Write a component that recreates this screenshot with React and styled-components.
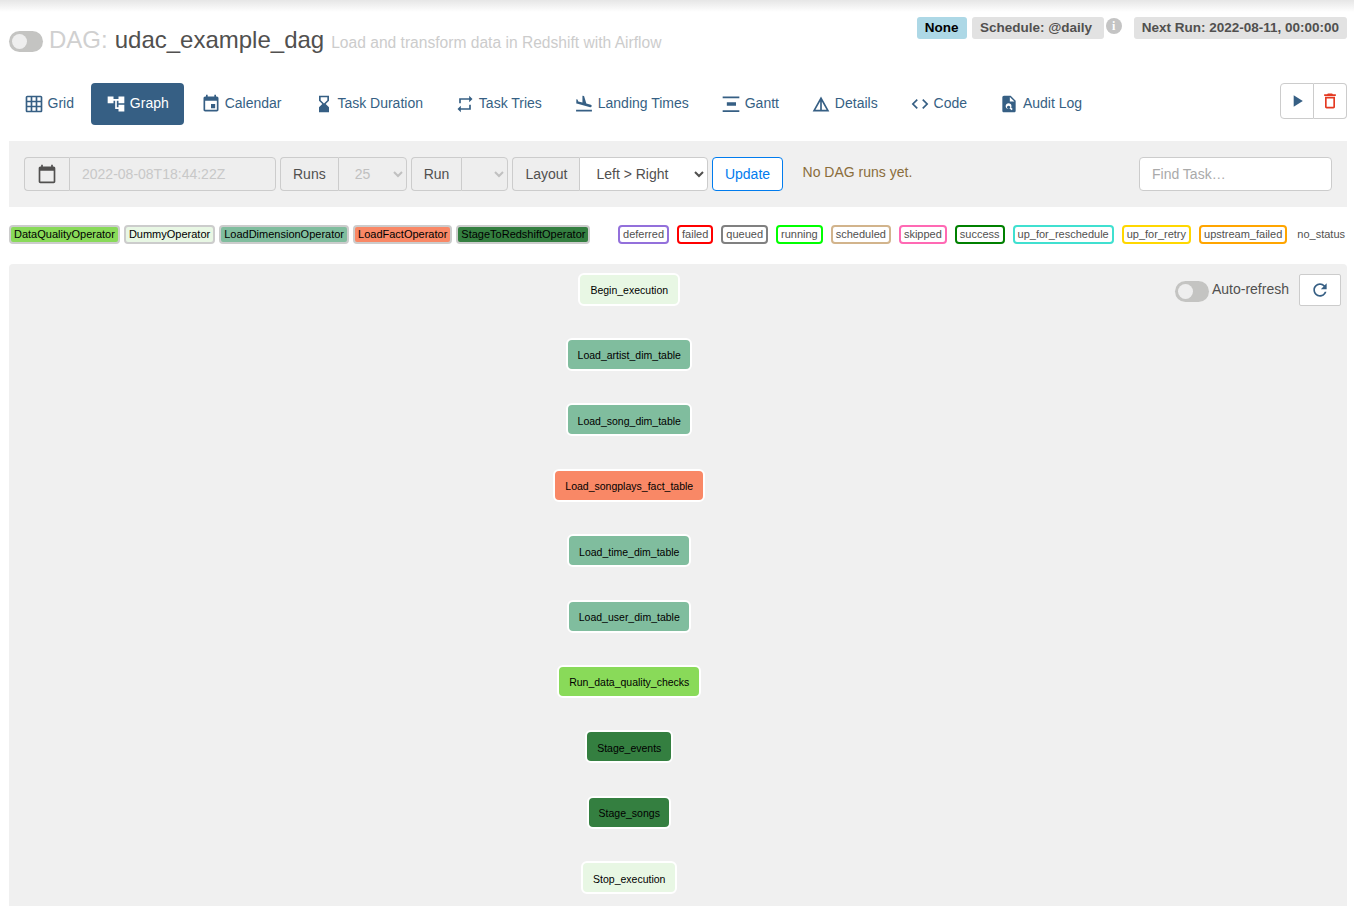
import styled, { createGlobalStyle } from 'styled-components'

const GlobalStyle = createGlobalStyle`
  html, body {
    height: 906px;
    margin: 0;
    overflow: hidden;
  }

  body {
    background: #fff;
    color: #51504f;
    font-family: "Liberation Sans", Arial, sans-serif;
    font-size: 14px;
  }

  * {
    box-sizing: border-box;
  }
`

const blue = '#365f84'

const TopShadow = styled.div`
  background: linear-gradient(#e6e6e6, #fff);
  height: 12px;
  left: 0;
  position: absolute;
  right: 0;
  top: 0;
`

const Page = styled.div`
  margin: 0 7px 0 9px;
  position: relative;
`

const Header = styled.div`
  align-items: flex-start;
  display: flex;
  height: 83px;
  justify-content: space-between;
`

const TitleRow = styled.h3`
  align-items: center;
  display: flex;
  font-size: 24px;
  font-weight: 400;
  line-height: 26px;
  margin: 23px 0 0;
`

const Toggle = styled.span`
  background: #c4c4c2;
  border-radius: 11px;
  display: inline-block;
  flex: none;
  height: 21px;
  margin-top: ${props => props.$offset || 0}px;
  padding: 3px;
  width: 34px;
`

const Knob = styled.span`
  background: #eee;
  border-radius: 50%;
  display: block;
  height: 15px;
  width: 15px;
`

const DagLabel = styled.span`
  color: #d0d0d0;
  margin-left: 6px;
`

const DagName = styled.span`
  margin-left: 7px;
`

const DagDescription = styled.small`
  color: #ccc;
  font-size: 15.6px;
  margin: 7px 0 0 7px;
`

const Badges = styled.div`
  align-items: flex-start;
  display: flex;
  margin-top: 17px;
`

const Badge = styled.span`
  background: ${props => props.$background || '#e2e2e2'};
  border-radius: 3px;
  color: ${props => props.$color || '#51504f'};
  font-size: 13.5px;
  font-weight: 700;
  height: 22px;
  line-height: 22px;
  margin-left: ${props => props.$gap || 0}px;
  padding: 0 ${props => props.$paddingRight || 8}px 0 8px;
`

const InfoDot = styled.span`
  align-items: center;
  background: #c4c4c4;
  border-radius: 50%;
  color: #fff;
  display: flex;
  font-family: "Liberation Serif", serif;
  font-size: 12px;
  font-weight: 700;
  height: 16px;
  justify-content: center;
  margin: 1px 0 0 2px;
  width: 16px;
`

const NavRow = styled.div`
  align-items: flex-start;
  display: flex;
  height: 58px;
  justify-content: space-between;
`

const Tabs = styled.nav`
  display: flex;
  gap: 2px;
`

const Tab = styled.a`
  align-items: center;
  background: ${props => props.$active ? blue : 'transparent'};
  border-radius: 4px;
  color: ${props => props.$active ? '#fff' : blue};
  display: flex;
  gap: 3.5px;
  height: 42px;
  padding: 0 15.4px 0 15px;
`

const TabLabel = styled.span`
  margin-top: -2px;
`

const Icon = styled.svg`
  display: block;
  fill: currentColor;
  flex: none;
  height: ${props => props.$size || 20}px;
  width: ${props => props.$size || 20}px;
`

const ActionGroup = styled.div`
  display: flex;
`

const ActionButton = styled.button`
  align-items: center;
  background: #fff;
  border: 1px solid #ccc;
  border-radius: ${props => props.$last ? '0 4px 4px 0' : '4px 0 0 4px'};
  border-left-width: ${props => props.$last ? 0 : 1}px;
  color: ${props => props.$danger ? '#e43921' : blue};
  display: flex;
  height: 36px;
  justify-content: center;
  padding: 0;
  width: ${props => props.$last ? 33 : 34}px;
`

const FilterBar = styled.form`
  align-items: flex-start;
  background: #f0f0f0;
  display: flex;
  height: 66px;
  justify-content: space-between;
  padding: 16px 15px;
`

const FilterControls = styled.div`
  display: flex;
  gap: 4px;
`

const InputGroup = styled.div`
  display: flex;
  height: 34px;
`

const Addon = styled.span`
  align-items: center;
  background: #eee;
  border: 1px solid #ccc;
  border-radius: 4px 0 0 4px;
  border-right: 0;
  color: #51504f;
  display: flex;
  justify-content: center;
  padding: 0 12px;
`

const DateInput = styled.input`
  background: #eee;
  border: 1px solid #ccc;
  border-radius: 0 4px 4px 0;
  color: #c8c8c8;
  font: inherit;
  padding: 0 12px;
  width: 207px;
`

const Select = styled.select`
  background: ${props => props.disabled ? '#eee' : '#fff'};
  border: 1px solid #ccc;
  border-radius: 0 4px 4px 0;
  color: ${props => props.disabled ? '#c0c0c0' : '#51504f'};
  font: inherit;
  opacity: 1;
  padding: 0 12px;
  width: ${props => props.$width}px;
`

const UpdateButton = styled.button`
  background: #fff;
  border: 1px solid #017cee;
  border-radius: 4px;
  color: #017cee;
  font: inherit;
  height: 34px;
  padding: 0 11.5px;
`

const Notice = styled.span`
  color: #8a6d3b;
  line-height: 20px;
  margin: 5px 0 0 16px;
`

const SearchInput = styled.input`
  background: #fff;
  border: 1px solid #ccc;
  border-radius: 4px;
  font: inherit;
  height: 34px;
  padding: 0 12px;
  width: 193px;

  &::placeholder {
    color: #aaa;
    opacity: 1;
  }
`

const Legend = styled.div`
  align-items: center;
  display: flex;
  height: 57px;
  justify-content: space-between;
  padding-bottom: 2px;
`

const LegendGroup = styled.div`
  display: flex;
  gap: ${props => props.$gap}px;
`

const OperatorTag = styled.span`
  background: ${props => props.$color};
  border: 2px solid #ccc;
  border-radius: 4px;
  color: #000;
  font-size: 11px;
  line-height: 15px;
  padding: 0 3px;
`

const StateTag = styled.span`
  background: #fff;
  border: 2px solid ${props => props.$color};
  border-radius: 4px;
  color: #51504f;
  font-size: 11px;
  line-height: 15px;
  padding: 0 3px;
`

const NoStatusTag = styled.span`
  color: #51504f;
  font-size: 11px;
  line-height: 19px;
  padding: 0 2px;
`

const GraphPanel = styled.div`
  background: #f0f0f0;
  border-radius: 4px 4px 0 0;
  height: 642px;
  overflow: hidden;
  padding-top: 8.6px;
  position: relative;
`

const AutoRefresh = styled.div`
  align-items: center;
  display: flex;
  position: absolute;
  right: 6px;
  top: 10px;
`

const AutoRefreshLabel = styled.span`
  margin: -2px 10px 0 3px;
`

const RefreshButton = styled.button`
  align-items: center;
  background: #fff;
  border: 1px solid #ccc;
  border-radius: 2px;
  color: ${blue};
  display: flex;
  height: 32px;
  justify-content: center;
  padding: 0;
  width: 42px;
`

const NodeColumn = styled.div`
  align-items: center;
  display: flex;
  flex-direction: column;
  gap: 32.4px;
  width: 1240px;
`

const Node = styled.div`
  align-items: center;
  background: ${props => props.$color};
  border: 2px solid #fff;
  border-radius: 6px;
  color: #000;
  display: flex;
  font-size: 10.5px;
  height: 33px;
  padding: 2px 9.5px 0 10px;
`

const stageGreen = '#347f40'

const operators = [
  ['DataQualityOperator', '#89da59'],
  ['DummyOperator', '#e8f7e4'],
  ['LoadDimensionOperator', '#80bd9e'],
  ['LoadFactOperator', '#f98866'],
  ['StageToRedshiftOperator', stageGreen]
]

const states = [
  ['deferred', 'mediumpurple'],
  ['failed', 'red'],
  ['queued', 'gray'],
  ['running', 'lime'],
  ['scheduled', 'tan'],
  ['skipped', 'hotpink'],
  ['success', 'green'],
  ['up_for_reschedule', 'turquoise'],
  ['up_for_retry', 'gold'],
  ['upstream_failed', 'orange']
]

const nodes = [
  ['Begin_execution', '#e8f7e4'],
  ['Load_artist_dim_table', '#80bd9e'],
  ['Load_song_dim_table', '#80bd9e'],
  ['Load_songplays_fact_table', '#f98866'],
  ['Load_time_dim_table', '#80bd9e'],
  ['Load_user_dim_table', '#80bd9e'],
  ['Run_data_quality_checks', '#89da59'],
  ['Stage_events', stageGreen],
  ['Stage_songs', stageGreen],
  ['Stop_execution', '#e8f7e4']
]

const icons = {
  grid: 'M20 2H4c-1.1 0-2 .9-2 2v16c0 1.1.9 2 2 2h16c1.1 0 2-.9 2-2V4c0-1.1-.9-2-2-2zM8 20H4v-4h4v4zm0-6H4v-4h4v4zm0-6H4V4h4v4zm6 12h-4v-4h4v4zm0-6h-4v-4h4v4zm0-6h-4V4h4v4zm6 12h-4v-4h4v4zm0-6h-4v-4h4v4zm0-6h-4V4h4v4z',
  tree: 'M22 11V3h-7v3H9V3H2v8h7V8h2v10h4v3h7v-8h-7v3h-2V8h2v3z',
  event: 'M17 12h-5v5h5v-5zM16 1v2H8V1H6v2H5c-1.11 0-1.99.9-1.99 2L3 19c0 1.1.89 2 2 2h14c1.1 0 2-.9 2-2V5c0-1.1-.9-2-2-2h-1V1h-2zm3 18H5V8h14v11z',
  calendar: 'M20 3h-1V1h-2v2H7V1H5v2H4c-1.1 0-2 .9-2 2v16c0 1.1.9 2 2 2h16c1.1 0 2-.9 2-2V5c0-1.1-.9-2-2-2zm0 18H4V8h16v13z',
  hourglass: 'M18 22l-.01-6L14 12l3.99-4.01L18 2H6v6l4 4-4 3.99V22h12zM8 7.5V4h8v3.5l-4 4-4-4z',
  repeat: 'M7 7h10v3l4-4-4-4v3H5v6h2V7zm10 10H7v-3l-4 4 4 4v-3h12v-6h-2v4z',
  land: 'M2.5 19h19v2h-19zm7.18-5.73l4.35 1.16 5.31 1.42c.8.21 1.62-.26 1.84-1.06.21-.8-.26-1.62-1.06-1.84l-5.31-1.42-2.76-9.02L10.12 2v8.28L5.15 8.95l-.93-2.32-1.45-.39v5.17l1.6.43 5.31 1.43z',
  gantt: 'M2 21.5v-2h20v2H2zM2 5V3h20v2H2zm5 9v-4h11v4H7z',
  details: 'M12 3L2 21h20L12 3zm1 5.92L18.6 19H13V8.92zm-2 0V19H5.4L11 8.92z',
  code: 'M9.4 16.6L4.8 12l4.6-4.6L8 6l-6 6 6 6 1.4-1.4zm5.2 0l4.6-4.6-4.6-4.6L16 6l6 6-6 6-1.4-1.4z',
  audit: 'M14 2H6c-1.1 0-2 .9-2 2v16c0 1.1.9 2 2 2h12c1.1 0 2-.9 2-2V8l-6-6zm1.04 17.45l-1.88-1.88c-1.33.71-3.01.53-4.13-.59-1.37-1.37-1.37-3.58 0-4.95 1.37-1.37 3.58-1.37 4.95 0 1.12 1.12 1.31 2.8.59 4.13l1.88 1.88-1.41 1.41zM13 9V3.5L18.5 9H13zm-1.5 5a2 2 0 1 0 0 4 2 2 0 0 0 0-4z',
  play: 'M8 5v14l11-7z',
  trash: 'M6 19c0 1.1.9 2 2 2h8c1.1 0 2-.9 2-2V7H6v12zM8 9h8v10H8V9zm7.5-5l-1-1h-5l-1 1H5v2h14V4z',
  refresh: 'M17.65 6.35C16.2 4.9 14.21 4 12 4c-4.42 0-7.99 3.58-7.99 8s3.57 8 7.99 8c3.73 0 6.84-2.55 7.73-6h-2.08c-.82 2.33-3.04 4-5.65 4-3.31 0-6-2.69-6-6s2.69-6 6-6c1.66 0 3.14.69 4.22 1.78L13 11h7V4l-2.35 2.35z'
}

const tabs = [
  ['Grid', 'grid'],
  ['Graph', 'tree'],
  ['Calendar', 'event'],
  ['Task Duration', 'hourglass'],
  ['Task Tries', 'repeat'],
  ['Landing Times', 'land'],
  ['Gantt', 'gantt'],
  ['Details', 'details'],
  ['Code', 'code'],
  ['Audit Log', 'audit']
]

const MaterialIcon = ({ name, size }) => (
  <Icon viewBox='0 0 24 24' $size={size}><path d={icons[name]} fillRule='evenodd' /></Icon>
)

const Switch = ({ offset }) => <Toggle $offset={offset}><Knob /></Toggle>

const App = () => (
  <>
    <GlobalStyle />
    <TopShadow />
    <Page>
      <Header>
        <TitleRow>
          <Switch offset={4} />
          <DagLabel>DAG:</DagLabel>
          <DagName>udac_example_dag</DagName>
          <DagDescription>Load and transform data in Redshift with Airflow</DagDescription>
        </TitleRow>
        <Badges>
          <Badge $background='#add8e6' $color='#000' $paddingRight={8.5}>None</Badge>
          <Badge $gap={5} $paddingRight={11.5}>Schedule: @daily</Badge>
          <InfoDot>i</InfoDot>
          <Badge $gap={12}>Next Run: 2022-08-11, 00:00:00</Badge>
        </Badges>
      </Header>

      <NavRow>
        <Tabs>
          {tabs.map(([label, icon]) => (
            <Tab key={label} $active={label === 'Graph'}>
              <MaterialIcon name={icon} />
              <TabLabel>{label}</TabLabel>
            </Tab>
          ))}
        </Tabs>
        <ActionGroup>
          <ActionButton aria-label='Trigger DAG'><MaterialIcon name='play' /></ActionButton>
          <ActionButton $last $danger aria-label='Delete DAG'><MaterialIcon name='trash' /></ActionButton>
        </ActionGroup>
      </NavRow>

      <FilterBar>
        <FilterControls>
          <InputGroup>
            <Addon><MaterialIcon name='calendar' /></Addon>
            <DateInput disabled defaultValue='2022-08-08T18:44:22Z' />
          </InputGroup>
          <InputGroup>
            <Addon>Runs</Addon>
            <Select disabled $width={69}><option>25</option></Select>
          </InputGroup>
          <InputGroup>
            <Addon>Run</Addon>
            <Select disabled $width={47}><option></option></Select>
          </InputGroup>
          <InputGroup>
            <Addon>Layout</Addon>
            <Select $width={129}><option>Left &gt; Right</option></Select>
          </InputGroup>
          <UpdateButton type='button'>Update</UpdateButton>
          <Notice>No DAG runs yet.</Notice>
        </FilterControls>
        <SearchInput placeholder='Find Task…' />
      </FilterBar>

      <Legend>
        <LegendGroup $gap={4}>
          {operators.map(([label, color]) => (
            <OperatorTag key={label} $color={color}>{label}</OperatorTag>
          ))}
        </LegendGroup>
        <LegendGroup $gap={8}>
          {states.map(([label, color]) => (
            <StateTag key={label} $color={color}>{label}</StateTag>
          ))}
          <NoStatusTag>no_status</NoStatusTag>
        </LegendGroup>
      </Legend>

      <GraphPanel>
        <AutoRefresh>
          <Switch offset={2} />
          <AutoRefreshLabel>Auto-refresh</AutoRefreshLabel>
          <RefreshButton aria-label='Refresh'><MaterialIcon name='refresh' /></RefreshButton>
        </AutoRefresh>
        <NodeColumn>
          {nodes.map(([label, color]) => (
            <Node key={label} $color={color}>{label}</Node>
          ))}
        </NodeColumn>
      </GraphPanel>
    </Page>
  </>
)

export default App
